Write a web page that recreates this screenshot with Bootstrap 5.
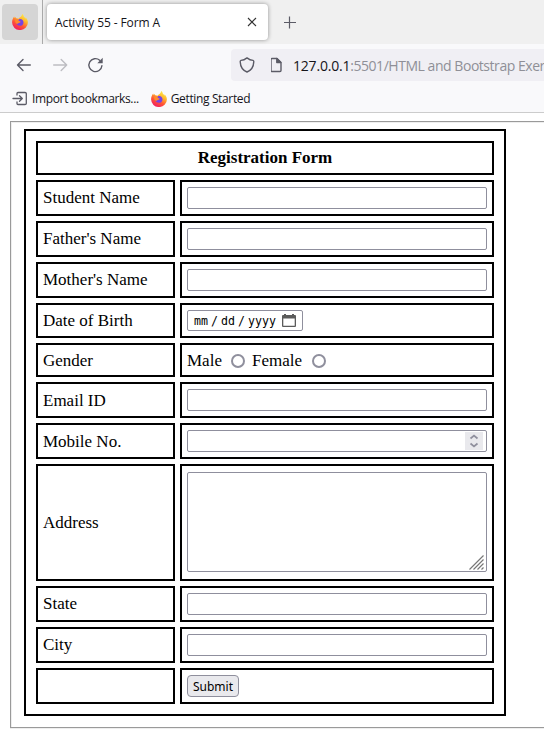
<!DOCTYPE html>
<html lang="en">
<head>
<meta charset="utf-8">
<meta name="viewport" content="width=device-width, initial-scale=1">
<title>Activity 55 - Form A</title>
<link href="https://cdn.jsdelivr.net/npm/bootstrap@5.3.0/dist/css/bootstrap.min.css" rel="stylesheet">
<style>
body{width:544px;height:747px;overflow:hidden;font-family:"Open Sans","Noto Sans",sans-serif;font-size:12px;color:#15141a;background:#fff}
svg{display:block;flex:none}
.tabstrip{height:44px;background:#f0f0f0}
.pinned{width:36px;height:36px;margin:4px 0 0 2px;background:#d5d5d5;border-radius:4px}
.divider{width:1px;height:44px;margin:0 4px;background:#aaa}
.active-tab{width:221px;height:36px;margin-top:4px;padding:0 11px 0 8px;background:#fff;border-radius:4px;box-shadow:0 0 4px rgba(0,0,0,.4)}
.active-tab span{letter-spacing:-.1px;padding-top:2px}
.tools{height:42px;background:#f9f9fb;padding-left:16px}
.forward{margin:0 17px 0 21px}
.address{width:313px;height:32px;background:#f0eff4;border-radius:4px 0 0 4px;padding-left:8px;font-size:14px;letter-spacing:-.46px;color:#8f8f97}
.url{margin-left:9px}
.host{color:#15141a;letter-spacing:-.2px}
.marks{height:27px;background:#f9f9fb;border-bottom:1px solid #ccc;padding:0 0 0 12px;letter-spacing:-.36px}
.marks .second{margin-left:12px}
.page{height:607px;margin:8px 0 0 10px;border:1px solid #9a9a9a;border-right:0;box-shadow:inset 1px 1px #eee,0 1px #eee;padding:7px 0 0 13px;font:17px/18px "Liberation Serif","Times New Roman",serif;color:#000}
.sheet{width:482px;height:587px;border:2px solid #000;padding:10px;gap:5px}
.line{display:grid;grid-template-columns:139px 314px;gap:5px;height:36px}
.line>*{border:2px solid #000;padding:0 5px;display:flex;align-items:center;min-width:0}
.line.title{grid-template-columns:1fr;height:34px}
.line.date{height:35px}
.line.gender{height:34px}
.line.gender>*{padding-top:1px}
.line.low>label{padding-top:2px}
.line.tall{height:117px}
.line.tall>div{align-items:flex-start;padding-top:6px}
.field{width:300px;height:22px;border:1px solid #8f8f9d;border-radius:2px;background:#fff;display:block;padding:1px 3px 1px 2px;outline:0}
.datebox{width:116px;height:21px;font:11.6px "DejaVu Sans Mono",monospace;padding:0 6px}
.datebox .sep{width:13px;text-align:center}
.datebox svg{margin-left:6px}
.area{height:100px;padding-right:2px}
.spin{width:18px;height:18px;background:#e9e9ed}
.ring{appearance:none;width:14px;height:14px;border:2px solid #8f8f9d;border-radius:50%;margin:0 7px 0 9px;background:#fff}
.ring:last-child{margin-left:10px}
.send{width:52px;height:22px;border:1px solid #8f8f9d;border-radius:4px;background:#e9e9ed;padding:1px 0 0;font:12px/18px "Noto Sans",sans-serif;color:#000}
</style>
</head>
<body>
<svg width="0" height="0" class="position-absolute"><defs>
<linearGradient id="flame" x1=".8" y1="0" x2=".25" y2="1"><stop offset="0" stop-color="#fff44f"/><stop offset=".35" stop-color="#ffb52c"/><stop offset=".65" stop-color="#ff5436"/><stop offset="1" stop-color="#ee1668"/></linearGradient>
<symbol id="fox" viewBox="0 0 16 16"><path fill="url(#flame)" d="M10.2 0c1 .7 1.5 1.8 1.7 2.8.9.6 1.4 1.2 1.8 1.9 0-.7-.1-1-.2-1.4 1.6 1.5 2.4 3.3 2.4 5.2A7.9 7.5 0 0 1 .1 8.6C.1 6.3.9 4.200 2.200 2.600l.4 1.300c.3-.5.7-.8 1.100-1 0 .6.200 1 .500 1.300.9-.1 1.600.1 2.300.5C7.500 3.500 9.800 2.800 10.200 0z"/><path fill="#7542e5" d="M7 5.300c2-1 4.500.4 4.500 3.100 0 1.900-1.500 3.400-3.500 3.400s-3.600-1.300-3.600-3.100c1 .8 2.200.7 3.200-.1.700-.4 1.100-.5 1-.9-.100-.500-1.600-.3-2-.900-.3-.5-.1-1.100.4-1.500z"/><path fill="#ff8b2d" d="M3 6c1.200-.8 2.600-.9 3.600-.2L6 6.900c.3.700 2 .3 2.200.9-.2.900-1.500 1-2.200 1.600-.8.500-1.800.3-2.400-.5z"/></symbol>
</defs></svg>

<header>
  <div class="tabstrip d-flex">
    <div class="pinned d-flex align-items-center justify-content-center"><svg width="16" height="16"><use href="#fox"/></svg></div>
    <div class="divider"></div>
    <div class="active-tab d-flex align-items-center justify-content-between">
      <span>Activity 55 - Form A</span>
      <svg width="10" height="10" stroke="#333" stroke-width="1.1"><path d="M1 1l8 8M9 1L1 9"/></svg>
    </div>
    <svg class="ms-3" width="12" height="44" stroke="#5b5b66" stroke-width="1.2"><path d="M0 22.500h12M5.500 16.500v12"/></svg>
  </div>
  <nav class="tools d-flex align-items-center">
    <svg width="16" height="16" fill="none" stroke="#5b5b66" stroke-width="1.400" stroke-linecap="round" stroke-linejoin="round"><path d="M14.300 8H1.500M7 2.500L1.500 8 7 13.500"/></svg>
    <svg class="forward" width="16" height="16" fill="none" stroke="#bdbdc2" stroke-width="1.400" stroke-linecap="round" stroke-linejoin="round"><path d="M.7 8h13M8.200 2.500l5.500 5.500-5.500 5.500"/></svg>
    <svg width="18" height="16" fill="none" stroke="#5b5b66" stroke-width="1.400" stroke-linecap="round"><path d="M15.900 8.700A6.500 6.500 0 1 1 13.700 3.200"/><path d="M16.700.8v5.400h-5.400z" fill="#5b5b66" stroke="none"/></svg>
    <div class="address d-flex align-items-center ms-auto flex-shrink-0 overflow-hidden">
      <svg width="16" height="16" fill="none" stroke="#5b5b66" stroke-width="1.400" stroke-linejoin="round"><path d="M8 .9q3 2.400 6 2.500.8.200.8 1.200c-.2 5-2.800 8.800-6.800 10.400C4 13.400 1.400 9.600 1.200 4.600q0-1 .8-1.200Q5 3.300 8 .9z"/></svg>
      <svg class="ms-3" width="13" height="16" fill="none" stroke="#5b5b66" stroke-width="1.400" stroke-linejoin="round"><path d="M-.2 2.500q0-1 1-1h5l4 4v8q0 1-1 1h-8q-1 0-1-1z" transform="translate(.2)"/><path d="M5.800 1.500v4h4z" fill="#5b5b66"/></svg>
      <span class="url text-nowrap"><span class="host">127.0.0.1</span>:5501/HTML and Bootstrap Exer</span>
    </div>
  </nav>
  <div class="marks d-flex align-items-center">
    <svg width="16" height="16" fill="none" stroke="#5b5b66" stroke-width="1.300" stroke-linecap="round" stroke-linejoin="round"><path d="M5 4V2.500q0-1 1-1h7q1.300 0 1.300 1v10q0 1-1.300 1H6q-1 0-1-1V11M1 7.500h9M7.500 4.700l2.800 2.800-2.800 2.800"/></svg>
    <span class="ms-1">Import bookmarks...</span>
    <svg class="second" width="16" height="16"><use href="#fox"/></svg>
    <span class="ms-1">Getting Started</span>
  </div>
</header>

<main class="page">
  <form class="sheet d-flex flex-column">
    <div class="line title"><strong class="justify-content-center">Registration Form</strong></div>
    <div class="line"><label>Student Name</label><div><input class="field" aria-label="Student Name"></div></div>
    <div class="line"><label>Father's Name</label><div><input class="field" aria-label="Father's Name"></div></div>
    <div class="line"><label>Mother's Name</label><div><input class="field" aria-label="Mother's Name"></div></div>
    <div class="line date"><label>Date of Birth</label><div>
      <div class="field datebox d-flex align-items-center"><span>mm</span><span class="sep">/</span><span>dd</span><span class="sep">/</span><span>yyyy</span>
      <svg width="14" height="14"><path fill="#5b5b5b" d="M2 0h2v1h6V0h2v1h1q1 0 1 1v10q0 1-1 1H1q-1 0-1-1V2q0-1 1-1h1zM1.300 4.500v7.200h11.400V4.500z" fill-rule="evenodd"/></svg></div></div></div>
    <div class="line gender"><span>Gender</span><div><span>Male</span><input class="ring" type="radio" name="gender" aria-label="Male"><span>Female</span><input class="ring" type="radio" name="gender" aria-label="Female"></div></div>
    <div class="line low"><label>Email ID</label><div><input class="field" aria-label="Email ID"></div></div>
    <div class="line low"><label>Mobile No.</label><div><div class="field d-flex justify-content-end"><div class="spin"><svg width="18" height="18" fill="none" stroke="#8f8f9d" stroke-width="1.700"><path d="M5.500 6.500L9 3.500l3.500 3M5.500 11.500l3.500 3 3.500-3"/></svg></div></div></div></div>
    <div class="line tall"><label>Address</label><div><div class="field area d-flex align-items-end justify-content-end"><svg width="15" height="15" stroke="#777" stroke-width="1.200"><path d="M.5 14.500l14-14M4.500 14.500l10-10M8.500 14.500l6-6M12.500 14.500l2-2"/></svg></div></div></div>
    <div class="line"><label>State</label><div><input class="field" aria-label="State"></div></div>
    <div class="line"><label>City</label><div><input class="field" aria-label="City"></div></div>
    <div class="line"><span></span><div><button class="send" type="button">Submit</button></div></div>
  </form>
</main>
<script src="https://cdn.jsdelivr.net/npm/bootstrap@5.3.0/dist/js/bootstrap.bundle.min.js"></script>
</body>
</html>
